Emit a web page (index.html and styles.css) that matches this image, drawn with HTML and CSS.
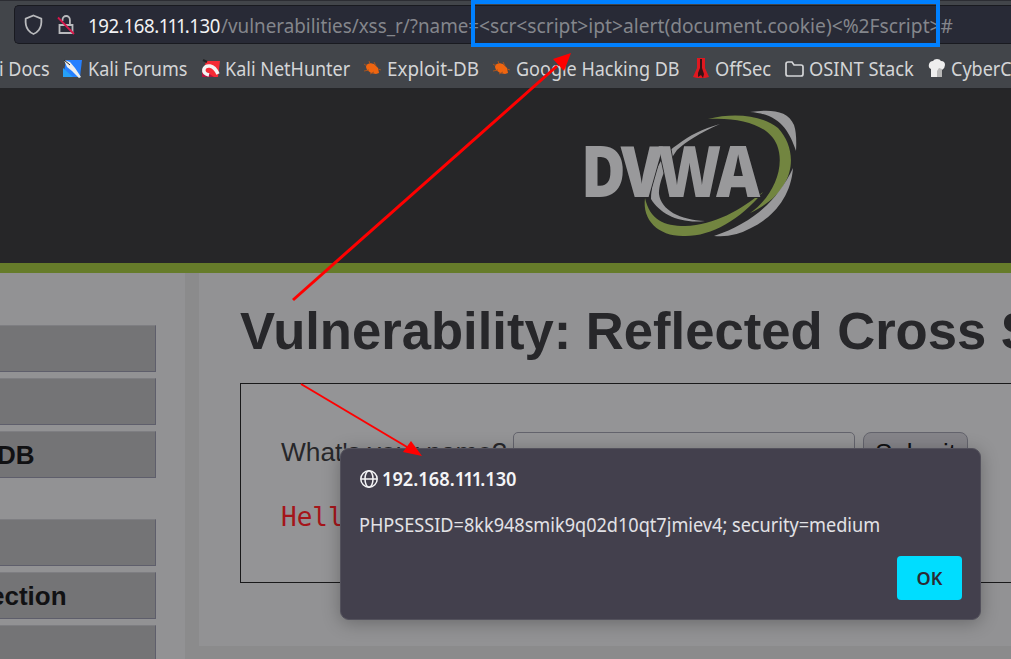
FILE: index.html
```
<!DOCTYPE html>
<html lang="en">
<head>
    <meta charset="UTF-8">
    <meta name="viewport" content="width=device-width, initial-scale=1.0">
    <title>Vulnerability: Reflected Cross Site Scripting (XSS)</title>
    <link rel="stylesheet" href="styles.css">
</head>
<body>

<div class="browser-bar">
    <div class="address">
        <svg class="shield" width="19" height="22" viewBox="0 0 19 22"><path d="M9.5 1.5 L17.3 4.6 Q18 12 14.8 16 Q12.5 19 9.5 20 Q6.500 19 4.200 16 Q1 12 1.700 4.600 Z"/></svg>
        <svg class="lock" width="18" height="22" viewBox="0 0 18 22"><path d="M2.500 11h13v8H2.500z M5.500 7V6a3.700 4 0 0 1 7.400 0v5"/><path class="slash" d="M1 3.500 L17 20"/></svg>
        <span class="host">192.168.<span class="ones">111</span>.130</span>
        <span class="path">/vulnerabilities/xss_r/?name=</span>
        <span class="payload">&lt;scr&lt;script&gt;ipt&gt;alert(document.cookie)&lt;%2Fscript&gt;#</span>
    </div>
</div>

<div class="bookmarks">
    <span class="docs">i Docs</span>
    <svg width="20" height="20" viewBox="0 0 20 20"><path fill="#2680ff" d="M3 1h16l-2 17H0z"/><path fill="#26a0f8" d="M0 9l10 9H0z"/><path fill="#eee" d="M1 1l6 2 5 6 6 9-2 1-7-7-5-4z"/><path stroke="#222" d="M1 1l6 5"/></svg>
    <span>Kali Forums</span>
    <svg width="20" height="20" viewBox="0 0 20 20"><path fill="#f52b35" d="M5 2h14l-2 16H1z"/><path fill="#b3133e" d="M1 10l12 8H1z"/><path d="M8 16C0 14 2 6 9 7Q14 8 17 15" fill="none" stroke="#f4f4f4" stroke-width="3.500"/><path stroke="#222" stroke-width="2" d="M2 1l4 2"/></svg>
    <span>Kali NetHunter</span>
    <svg width="17" height="18" viewBox="0 0 17 18"><path class="bug" d="M2 5l4-2 4 1 4 4 1 5-3 1-5-1-4-3-1-3z"/><path class="legs" d="M0 4l3 2M5 1l1 3M10 2l2 4M0 11l5-1M6 14l4-2M14 9l3 1"/></svg>
    <span class="exploit">Exploit-DB</span>
    <svg width="17" height="18" viewBox="0 0 17 18"><path class="bug" d="M2 5l4-2 4 1 4 4 1 5-3 1-5-1-4-3-1-3z"/><path class="legs" d="M0 4l3 2M5 1l1 3M10 2l2 4M0 11l5-1M6 14l4-2M14 9l3 1"/></svg>
    <span>Google Hacking DB</span>
    <svg width="17" height="21" viewBox="0 0 17 21"><path fill="#df1820" d="M4 0h8v10l4 9-4 1H4l-4-1 4-9z"/><path fill="#351316" d="M7 1h2v9l2 6-1 4-2-3-3 2v-4l2-5z"/></svg>
    <span class="offsec">OffSec</span>
    <svg width="20" height="18" viewBox="0 0 20 18"><path class="folder" d="M3 2h4l2 3h7q2 0 2 2v7q0 2-2 2H3q-2 0-2-2V4q0-2 2-2z"/></svg>
    <span class="osint">OSINT Stack</span>
    <svg width="18" height="19" viewBox="0 0 18 19"><path fill="#eee" d="M3 10Q0 9 1 5q1-3 4-3 1-2 4-2t4 2q4 0 4 4 0 3-3 5v7H3z"/><path fill="#b8b8b8" d="M11 9l3 1v8H9v-6z"/></svg>
    <span>CyberC</span>
</div>

<div class="header">
    <svg class="logo" width="220" height="132" viewBox="0 0 220 132">
        <path fill="#99999b" d="M170 4C190 1 208 2 214 17Q217 26 216 43C209 22 199 6 170 4z"/>
        <path fill="#99999b" d="M140 16C118 26 107 33 97 42C83 62 79 76 79 86C81 102 100 112 125 113C100 116 80 106 71 91C72 70 77 50 97 37C110 27 122 21 140 16z"/>
        <path fill="#728540" d="M128 11C156 4 183 8 198 20C220 44 216 84 170 105C192 90 206 60 197 37C189 17 160 9 128 11z"/>
        <path fill="#728540" d="M65 90C70 112 84 118 105 118C135 117 160 102 183 84C159 113 130 129 103 128C78 128 62 112 65 90z"/>
        <path fill="#99999b" d="M213 60C211 88 194 109 171 120Q153 130 134 128C173 115 198 92 213 60z"/>
        <text class="dvwa" x="1" y="89" textLength="174" lengthAdjust="spacingAndGlyphs">DVWA</text>
    </svg>
</div>

<div class="page">
    <div class="menu">
        <ul>
            <li></li>
            <li></li>
            <li class="db">DB</li>
        </ul>
        <ul>
            <li></li>
            <li class="injection">ection</li>
            <li></li>
        </ul>
    </div>
    <div class="content">
        <h1>Vulnerability: Reflected Cross Site</h1>
        <div class="vulnerable">
            <form>
                <label>What's your name?</label>
                <input type="text">
                <button type="button">Submit</button>
            </form>
            <pre>Hello</pre>
        </div>
    </div>
</div>

<div class="dialog">
    <div class="origin">
        <svg width="20" height="20" viewBox="0 0 20 20"><circle cx="10" cy="10" r="8.200"/><ellipse cx="10" cy="10" rx="4" ry="8.200"/><path d="M2 10h16"/></svg>
        <span>192.168.<span class="ones">111</span>.130</span>
    </div>
    <p>PHPSESSID=8kk948smik9q02d10qt7jmiev4; security=medium</p>
    <button class="ok" type="button">OK</button>
</div>

<!-- annotations -->
<div class="highlight"></div>
<svg class="arrows" width="1011" height="659" viewBox="0 0 1011 659">
    <path class="line thick" d="M293 300L557 66"/>
    <path class="head" d="M571 53L564 71L553 59z"/>
    <path class="line" d="M301 384L407 447"/>
    <path class="head" d="M422 456L403 452L411 441z"/>
</svg>

</body>
</html>
```
FILE: styles.css
```
* {
    box-sizing: border-box;
}
body {
    margin: 0;
    width: 1011px;
    height: 659px;
    overflow: hidden;
    position: relative;
    background: #8b8b8c;
    font-family: "Liberation Sans", Arial, sans-serif;
}
.browser-bar {
    height: 47px;
    padding: 4px 0 0 14px;
    background: #42454a;
    border-top: 1px solid #2c2d33;
}
.address {
    height: 39px;
    display: flex;
    align-items: center;
    padding-left: 9px;
    white-space: nowrap;
    font: 20px "Noto Sans", sans-serif;
    background: #282a36;
    border: 1px solid #191a20;
    border-right: 0;
    border-radius: 5px 0 0 5px;
}
.address svg {
    flex: none;
    fill: none;
    stroke: #b9babd;
    stroke-width: 1.8;
}
.address > span {
    flex: none;
    padding-top: 2px;
    transform-origin: left;
}
.lock {
    margin-left: 14px;
}
.address .slash {
    stroke: #d6174b;
}
.host {
    width: 133px;
    margin-left: 13px;
    letter-spacing: -0.4px;
    transform: scaleX(0.93);
    color: #f2f2f4;
}
.ones {
    letter-spacing: -2.2px;
}
.path {
    width: 258px;
    transform: scaleX(0.941);
    color: #84868c;
}
.payload {
    transform: scaleX(0.96);
    color: #84868c;
}
.bookmarks {
    height: 43px;
    padding-top: 2px;
    display: grid;
    grid-template-columns: 63px 25px 113px 24px 139px 23px 106px 23px 177px 22px 70px 24px 119px 23px 70px;
    align-items: center;
    white-space: nowrap;
    font: 20px "Noto Sans", sans-serif;
    color: #d4d5d7;
    background: #42454a;
    border-bottom: 2px solid #242528;
}
.bookmarks span {
    transform: scaleX(0.9);
    transform-origin: left;
}
.bookmarks .docs {
    margin-left: -1px;
}
.bookmarks .exploit {
    transform: scaleX(0.943);
}
.bookmarks .offsec, .bookmarks .osint {
    transform: scaleX(0.915);
}
.bookmarks svg {
    display: block;
}
.bug {
    fill: #ef6510;
}
.legs {
    stroke: #a6531f;
    fill: none;
}
.folder {
    fill: none;
    stroke: #d4d5d7;
    stroke-width: 1.700;
}
.header {
    height: 183px;
    padding: 18px 0 0 580px;
    background: #262628;
    border-bottom: 10px solid #667c2a;
}
.logo {
    display: block;
}
.dvwa {
    font: 800 70px "Open Sans", sans-serif;
    letter-spacing: -6px;
    fill: #99999b;
    stroke: #262628;
    stroke-width: 2;
    paint-order: stroke;
}
.page {
    display: flex;
    height: 386px;
}
.menu {
    width: 185px;
    padding-top: 52px;
    background: #929294;
}
.menu ul {
    list-style: none;
    margin: 0 0 41px;
    padding: 0;
    width: 156px;
    display: flex;
    flex-direction: column;
    gap: 6px;
}
.menu li {
    height: 47px;
    line-height: 46px;
    font-size: 26px;
    font-weight: bold;
    color: #111113;
    background: #747476;
    border: 1px solid #5e5e6b;
    border-top-color: #7e7e82;
    border-left: 0;
}
.menu .db {
    text-indent: -3px;
}
.menu .injection {
    text-indent: -10px;
}
.content {
    flex: 1;
    height: 373px;
    margin-left: 14px;
    padding: 27px 0 0 41px;
    background: #929294;
    overflow: hidden;
}
.content h1 {
    margin: 0;
    height: 83px;
    line-height: 62px;
    font-size: 52.6px;
    white-space: nowrap;
    color: #27272a;
}
.vulnerable {
    width: 900px;
    height: 200px;
    padding: 48px 40px 0;
    background: #949496;
    border: 1px solid #19191a;
}
.vulnerable form {
    display: flex;
    font-size: 26.3px;
    color: #27272a;
}
.vulnerable label {
    width: 232px;
    line-height: 40px;
    white-space: nowrap;
}
.vulnerable input {
    width: 342px;
    height: 42px;
    background: #949496;
    border: 1px solid #64646d;
    border-radius: 5px;
}
.vulnerable form button {
    width: 105px;
    height: 42px;
    margin-left: 8px;
    padding: 0;
    font: 26px "Liberation Sans", sans-serif;
    color: #111113;
    background: #858489;
    border: 1px solid #64646d;
    border-radius: 8px;
}
.vulnerable pre {
    margin: 28px 0 0;
    font: 26px "DejaVu Sans Mono", monospace;
    color: #a5151a;
}
.dialog {
    position: absolute;
    left: 340px;
    top: 448px;
    width: 641px;
    height: 172px;
    padding: 18px 18px;
    display: flex;
    flex-direction: column;
    font: 19px "Noto Sans", sans-serif;
    color: #e2e2e6;
    background: #43404d;
    border: 1px solid #53515c;
    border-radius: 9px;
    box-shadow: 0 3px 18px rgba(0, 0, 0, 0.28);
}
.origin {
    display: flex;
    align-items: center;
    height: 24px;
    gap: 3px;
    font-weight: 600;
    color: #f4f4f6;
}
.origin svg {
    fill: none;
    stroke: #f4f4f6;
    stroke-width: 1.500;
}
.origin > span {
    transform: scaleX(0.96);
    transform-origin: left;
}
.origin .ones {
    letter-spacing: -2px;
}
.dialog p {
    margin: 21px 0 0;
    line-height: 26px;
    white-space: nowrap;
    transform: scaleX(0.953);
    transform-origin: left;
}
.ok {
    width: 65px;
    height: 44px;
    margin: 18px 0 0 auto;
    font: 600 18px "Noto Sans", sans-serif;
    color: #2b2a33;
    background: #00ddff;
    border: 0;
    border-radius: 4px;
}
.highlight {
    position: absolute;
    left: 471px;
    top: 0;
    width: 469px;
    height: 47px;
    border: 4px solid #0080ff;
}
.arrows {
    position: absolute;
    left: 0;
    top: 0;
}
.line {
    stroke: #ff0000;
    stroke-width: 2;
}
.thick {
    stroke-width: 3;
}
.head {
    fill: #ff0000;
}
```
